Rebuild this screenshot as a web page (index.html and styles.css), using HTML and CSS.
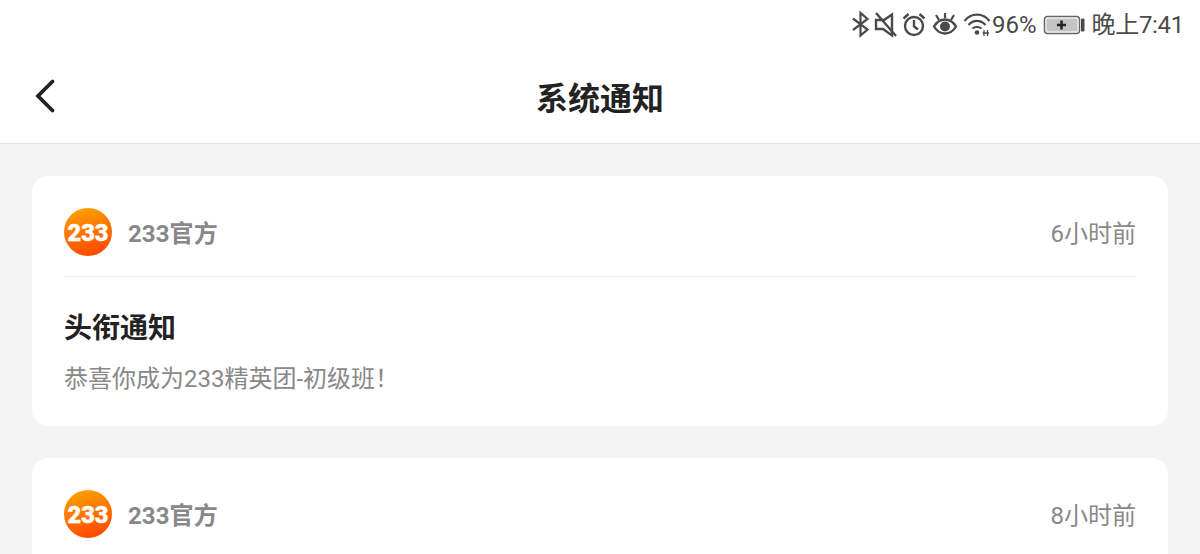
FILE: index.html
```html
<!DOCTYPE html>
<html lang="zh-CN">
<head>
<meta charset="utf-8">
<title>系统通知</title>
<link rel="stylesheet" href="styles.css">
</head>
<body>
<div class="status">
  <svg class="ic" width="22" height="28" viewBox="0 0 22 28"><path d="M2 8.500 16.500 19.500 9.500 25.500V3l7 6L2 20" fill="none" stroke="#4a4a4a" stroke-width="2.200"/></svg>
  <svg class="ic" width="28" height="28" viewBox="0 0 28 28"><path d="M19 4.500 11 10H3v9h7l9 6.500V4.500z" fill="none" stroke="#4a4a4a" stroke-width="2.400"/><path d="M3 3l20 23" stroke="#4a4a4a" stroke-width="2.400"/></svg>
  <svg class="ic" width="30" height="28" viewBox="0 0 30 28"><circle cx="13" cy="16" r="9" fill="none" stroke="#4a4a4a" stroke-width="2.400"/><path d="M13 10v6.500l4 3M2.500 8.500 7.500 4M23.500 8.500 18.500 4" fill="none" stroke="#4a4a4a" stroke-width="2.400"/></svg>
  <svg class="ic" width="32" height="28" viewBox="0 0 32 28"><path d="M3 16.500C6 11.500 10 9.500 14 9.500s8 2 11 7c-3 5-7 7-11 7s-8-2-11-7z" fill="none" stroke="#4a4a4a" stroke-width="2.400"/><circle cx="14" cy="16.500" r="5" fill="#4a4a4a"/><path d="M5 5l3 5M23 5l-3 5M14 3v5" stroke="#4a4a4a" stroke-width="2.200"/></svg>
  <svg class="ic" width="29" height="28" viewBox="0 0 29 28"><path d="M1.500 11C8 2.500 20 2.500 26.500 11M5.500 15c5-5.500 12-5.500 17 0M9.500 18.500c2.500-2 6.500-2 9 0" fill="none" stroke="#4a4a4a" stroke-width="2.200"/><circle cx="14" cy="22.500" r="2.300" fill="#4a4a4a"/><path d="M21 20v6M24.500 20v6M19.500 23h6.500" stroke="#4a4a4a" stroke-width="1.300"/></svg>
  <span class="pct">96%</span>
  <svg class="batt" width="42" height="28" viewBox="0 0 42 28"><rect x="1.500" y="6.500" width="35" height="17" rx="3" fill="#fff" stroke="#666" stroke-width="1.500"/><rect x="3.500" y="8.500" width="31" height="13" rx="1" fill="#c4c4c4"/><path d="M14 15h9M18.500 10.500v9" stroke="#222" stroke-width="2.500"/><rect x="38" y="8.500" width="3.500" height="13" rx="1" fill="#4a4a4a"/></svg>
  <span class="time">晚上7:41</span>
</div>
<header class="nav">
  <svg class="back" width="24" height="36" viewBox="0 0 24 36"><path d="M21.500 3.500 7 18l14.500 14.500" fill="none" stroke="#222" stroke-width="3.800" stroke-linecap="round"/></svg>
  <h1 class="title">系统通知</h1>
</header>
<main class="list">
  <article class="card card-full">
    <div class="head">
      <svg class="logo" width="48" height="48" viewBox="0 0 48 48"><defs><linearGradient id="g1" x1="0.300" y1="0" x2="0.600" y2="1"><stop offset="0" stop-color="#ffa000"/><stop offset="1" stop-color="#ff4800"/></linearGradient></defs><circle cx="24" cy="24" r="24" fill="url(#g1)"/><text class="logo-t" x="24" y="32.500" text-anchor="middle" textLength="41" lengthAdjust="spacingAndGlyphs">233</text></svg>
      <span class="name">233官方</span>
      <span class="when">6小时前</span>
    </div>
    <h2 class="subj">头衔通知</h2>
    <p class="body">恭喜你成为233精英团-初级班！</p>
  </article>
  <article class="card card-cut">
    <div class="head">
      <svg class="logo" width="48" height="48" viewBox="0 0 48 48"><defs><linearGradient id="g2" x1="0.300" y1="0" x2="0.600" y2="1"><stop offset="0" stop-color="#ffa000"/><stop offset="1" stop-color="#ff4800"/></linearGradient></defs><circle cx="24" cy="24" r="24" fill="url(#g2)"/><text class="logo-t" x="24" y="32.500" text-anchor="middle" textLength="41" lengthAdjust="spacingAndGlyphs">233</text></svg>
      <span class="name">233官方</span>
      <span class="when">8小时前</span>
    </div>
  </article>
</main>
</body>
</html>
```
FILE: styles.css
```css
* { box-sizing: border-box; margin: 0; padding: 0; }
html, body { height: 554px; overflow: hidden; }
body { background: #f4f4f4; font-family: Roboto, "Noto Sans CJK SC", sans-serif; }
.status { height: 52px; background: #fff; display: flex; align-items: center; justify-content: flex-end; padding: 0 16px 4px 0; color: #4a4a4a; font-size: 24px; line-height: 28px; }
.ic { display: block; flex: none; }
.pct { margin-top: 2px; }
.batt { margin-left: 6px; margin-right: 1px; display: block; flex: none; }
.time { margin-left: 6px; margin-top: 2px; letter-spacing: -0.3px; }
.nav { height: 92px; background: #fff; border-bottom: 1px solid #e5e5e5; display: flex; align-items: center; justify-content: center; position: relative; padding-bottom: 4px; }
.back { position: absolute; left: 31px; top: 26px; }
.title { font-size: 32px; font-weight: 700; color: #222; }
.list { padding: 32px; display: flex; flex-direction: column; gap: 32px; }
.card { background: #fff; border-radius: 16px; padding: 0 32px; }
.card-full { height: 250px; }
.card-cut { height: 120px; }
.head { height: 101px; display: flex; align-items: center; gap: 16px; border-bottom: 1px solid #eee; padding: 32px 0 20px; }
.name { font-size: 24px; font-weight: 700; color: #888; flex: 1; letter-spacing: 0.1px; line-height: 46px; margin-top: 4px; }
.when { font-size: 24px; color: #888; line-height: 46px; margin-top: 4px; }
.logo { flex: none; }
.logo-t { font-family: Roboto, sans-serif; font-size: 23px; font-weight: 900; fill: #fff; stroke: #fff; stroke-width: 0.4px; }
.subj { font-size: 28px; font-weight: 700; color: #222; margin-top: 31px; line-height: 42px; }
.body { font-size: 24px; color: #888; margin-top: 12px; line-height: 34px; }
```
